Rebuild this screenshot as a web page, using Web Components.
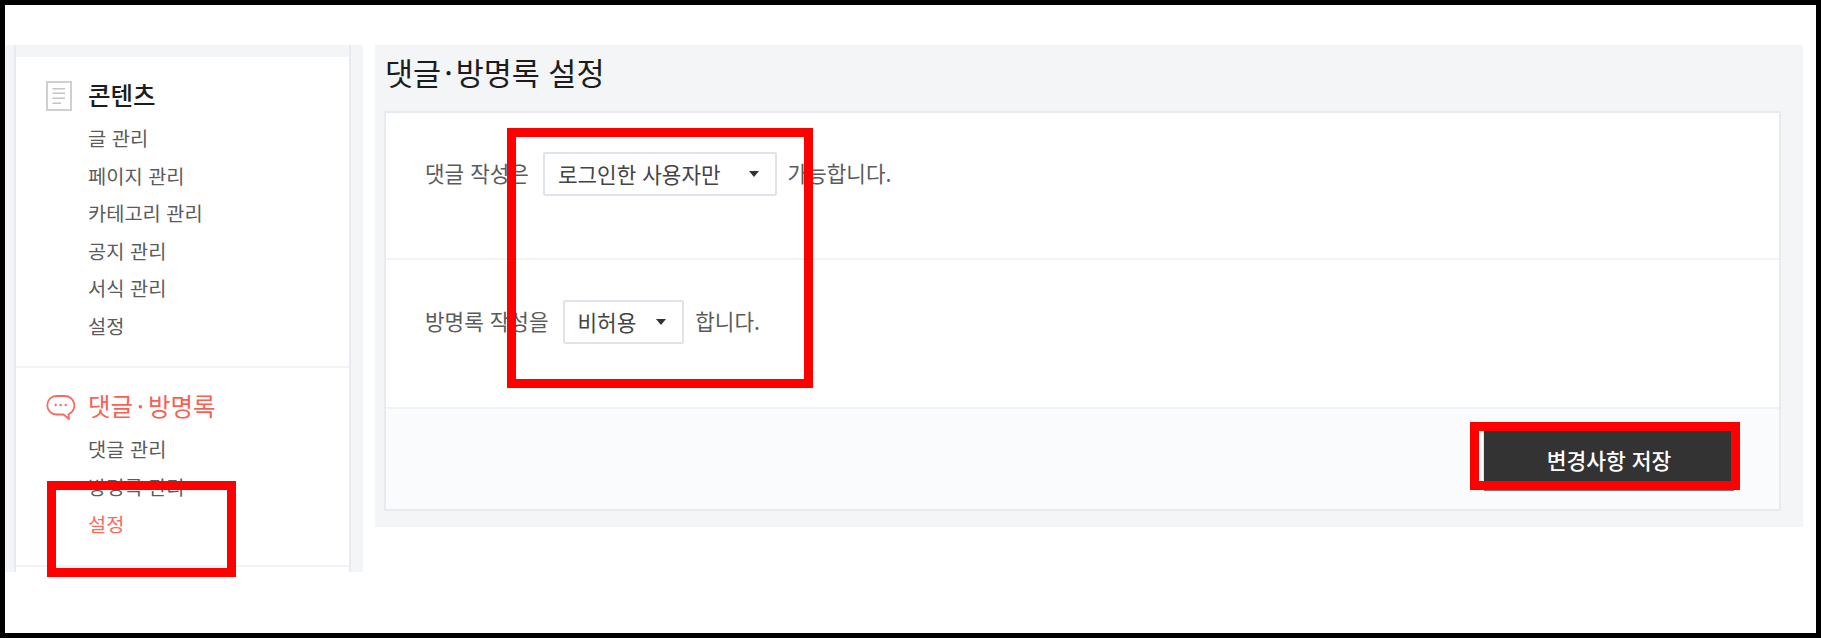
<!DOCTYPE html>
<html lang="ko">
<head>
<meta charset="utf-8">
<title>댓글·방명록 설정</title>
<style>
  html, body { margin: 0; padding: 0; background: #fff; }
  body { font-family: "Noto Sans CJK KR", "Noto Sans", sans-serif; }
</style>
</head>
<body>
<admin-frame>
  <admin-sidebar>
    <side-section title="콘텐츠">
      <svg slot="icon" width="26" height="30" viewBox="0 0 26 30" fill="none">
        <rect x="1" y="1" width="24" height="28" fill="#fff" stroke="#cfcfcf" stroke-width="2"/>
        <path d="M6.500 7.700h12.500M6.500 12.300h12.500M6.500 17.300h12.500M6.500 22.300h8.500" stroke="#c4c4c4" stroke-width="1.500"/>
      </svg>
      <side-item>글 관리</side-item>
      <side-item>페이지 관리</side-item>
      <side-item>카테고리 관리</side-item>
      <side-item>공지 관리</side-item>
      <side-item>서식 관리</side-item>
      <side-item>설정</side-item>
    </side-section>
    <side-section title="댓글·방명록" active>
      <svg slot="icon" width="30" height="25" viewBox="0 0 30 25" fill="none">
        <path d="M10.500 1H19a9.500 9.500 0 0 1 3.500 18.300L23 24l-5.500-4.500H10.500a9.250 9.250 0 0 1 0-18.500z" stroke="#fb6a5f" stroke-width="1.800" stroke-linejoin="round"/>
        <circle cx="9.700" cy="10" r="1.200" fill="#fb6a5f"/>
        <circle cx="14.700" cy="10" r="1.200" fill="#fb6a5f"/>
        <circle cx="19.700" cy="10" r="1.200" fill="#fb6a5f"/>
      </svg>
      <side-item>댓글 관리</side-item>
      <side-item>방명록 관리</side-item>
      <side-item active>설정</side-item>
    </side-section>
    <side-section></side-section>
  </admin-sidebar>

  <settings-page title="댓글·방명록 설정">
    <setting-row>댓글 작성은 <fake-select value="로그인한 사용자만" style="--gap:28px"></fake-select> 가능합니다.</setting-row>
    <setting-row>방명록 작성을 <fake-select value="비허용" style="--gap:20px"></fake-select> 합니다.</setting-row>
    <save-button slot="footer">변경사항 저장</save-button>
  </settings-page>

  <annot-box style="left:42px;top:476px;width:189px;height:96px"></annot-box>
  <annot-box style="left:502px;top:123px;width:306px;height:260px"></annot-box>
  <annot-box style="left:1465px;top:417px;width:270px;height:68px"></annot-box>
</admin-frame>

<script>
// the middle dot sits wider in the reference than the font sets it
function spacedDot(text) {
  return text.replace('·', '<span class="dot">·</span>');
}

class AdminFrame extends HTMLElement {
  constructor() {
    super();
    this.attachShadow({ mode: 'open' });
    this.shadowRoot.innerHTML = `
      <style>
        :host {
          display: flex;
          position: relative;
          box-sizing: border-box;
          width: 1821px;
          height: 638px;
          border: 5px solid #000;
          padding-top: 40px;
          gap: 12px;
          align-items: flex-start;
          overflow: hidden;
          background: #fff;
        }
      </style>
      <slot></slot>
    `;
  }
}

class AdminSidebar extends HTMLElement {
  constructor() {
    super();
    this.attachShadow({ mode: 'open' });
    this.shadowRoot.innerHTML = `
      <style>
        :host {
          display: block;
          box-sizing: border-box;
          width: 358px;
          height: 527px;
          padding: 0 12px 0 9px;
          background: #f3f5f7;
          overflow: hidden;
        }
        .panel {
          background: #fff;
          border-left: 2px solid #e6eaf1;
          border-right: 2px solid #e6eaf1;
          height: 100%;
        }
        .panel::before {
          content: '';
          display: block;
          height: 12px;
          background: #f3f5f7;
        }
      </style>
      <div class="panel"><slot></slot></div>
    `;
  }
}

class SideSection extends HTMLElement {
  constructor() {
    super();
    this.attachShadow({ mode: 'open' });
    const title = this.getAttribute('title') || '';
    this.shadowRoot.innerHTML = `
      <style>
        :host {
          display: block;
          box-sizing: border-box;
          padding: 19px 0 22px 30px;
          border-bottom: 2px solid #f1f3f6;
        }
        .head {
          display: flex;
          align-items: center;
          height: 40px;
          margin-bottom: 3px;
          font-size: 24.500px;
          font-weight: 500;
          color: #1c1c1c;
        }
        :host([active]) .head { color: #fb5f53; font-weight: 400; }
        .icon { width: 42px; flex: none; display: flex; align-items: center; }
        .label { padding-bottom: 3px; }
        .dot { margin: 0 4px; }
      </style>
      <div class="head"><span class="icon"><slot name="icon"></slot></span><span class="label">${spacedDot(title)}</span></div>
      <slot></slot>
    `;
  }
}

class SideItem extends HTMLElement {
  constructor() {
    super();
    this.attachShadow({ mode: 'open' });
    this.shadowRoot.innerHTML = `
      <style>
        :host {
          display: block;
          height: 37.500px;
          line-height: 37.500px;
          padding-left: 42px;
          font-size: 19.800px;
          color: #5b5b5b;
        }
        :host([active]) { color: #fb6a5f; }
      </style>
      <slot></slot>
    `;
  }
}

class SettingsPage extends HTMLElement {
  constructor() {
    super();
    this.attachShadow({ mode: 'open' });
    const title = this.getAttribute('title') || '';
    this.shadowRoot.innerHTML = `
      <style>
        :host {
          display: block;
          box-sizing: border-box;
          width: 1428px;
          height: 482px;
          padding: 0 22px 16px 9px;
          background: #f3f5f7;
        }
        h2 {
          margin: 0 0 0 1px;
          height: 66px;
          line-height: 54px;
          font-size: 30.500px;
          font-weight: 400;
          color: #1c1c1c;
        }
        .dot { margin: 0 3px; }
        .card {
          box-sizing: border-box;
          height: 400px;
          display: flex;
          flex-direction: column;
          background: #fff;
          border: 2px solid #e6eaf1;
        }
        .footer {
          flex: 1;
          box-sizing: border-box;
          display: flex;
          justify-content: flex-end;
          align-items: flex-end;
          padding: 0 45px 19px 0;
          background: #fafbfd;
          border-top: 2px solid #f1f3f6;
        }
      </style>
      <h2>${spacedDot(title)}</h2>
      <div class="card">
        <div class="rows"><slot></slot></div>
        <div class="footer"><slot name="footer"></slot></div>
      </div>
    `;
  }
}

class SettingRow extends HTMLElement {
  constructor() {
    super();
    this.attachShadow({ mode: 'open' });
    this.shadowRoot.innerHTML = `
      <style>
        :host {
          display: block;
          box-sizing: border-box;
          height: 147px;
          padding: 39px 0 0 39px;
          font-size: 21.300px;
          line-height: 42px;
          color: #5b5b5b;
          border-bottom: 2px solid #f1f3f6;
        }
        :host(:last-of-type) { border-bottom: 0; padding-top: 40px; }
      </style>
      <slot></slot>
    `;
  }
}

class FakeSelect extends HTMLElement {
  constructor() {
    super();
    this.attachShadow({ mode: 'open' });
    this.shadowRoot.innerHTML = `
      <style>
        :host {
          display: inline-flex;
          box-sizing: border-box;
          height: 44px;
          margin: 0 5px 0 8px;
          padding: 0 16px 0 13px;
          gap: var(--gap, 20px);
          align-items: center;
          vertical-align: top;
          font-size: 21.300px;
          color: #444;
          background: #fff;
          border: 2px solid #dfe3ea;
          border-radius: 2px;
        }
        .arrow {
          width: 0;
          height: 0;
          border-left: 5px solid transparent;
          border-right: 5px solid transparent;
          border-top: 6px solid #333;
        }
      </style>
      <span>${this.getAttribute('value') || ''}</span><span class="arrow"></span>
    `;
  }
}

class SaveButton extends HTMLElement {
  constructor() {
    super();
    this.attachShadow({ mode: 'open' });
    this.shadowRoot.innerHTML = `
      <style>
        :host {
          display: flex;
          box-sizing: border-box;
          width: 250px;
          height: 60px;
          padding-bottom: 2px;
          align-items: center;
          justify-content: center;
          font-size: 21.500px;
          font-weight: 500;
          color: #fff;
          background: #333;
          box-shadow: 0 1px 1px rgba(0,0,0,0.5);
        }
      </style>
      <slot></slot>
    `;
  }
}

class AnnotBox extends HTMLElement {
  constructor() {
    super();
    this.attachShadow({ mode: 'open' });
    this.shadowRoot.innerHTML = `
      <style>
        :host {
          display: block;
          position: absolute;
          box-sizing: border-box;
          border: 9px solid #f00;
        }
      </style>
    `;
  }
}

customElements.define('admin-frame', AdminFrame);
customElements.define('admin-sidebar', AdminSidebar);
customElements.define('side-section', SideSection);
customElements.define('side-item', SideItem);
customElements.define('settings-page', SettingsPage);
customElements.define('setting-row', SettingRow);
customElements.define('fake-select', FakeSelect);
customElements.define('save-button', SaveButton);
customElements.define('annot-box', AnnotBox);
</script>
</body>
</html>
